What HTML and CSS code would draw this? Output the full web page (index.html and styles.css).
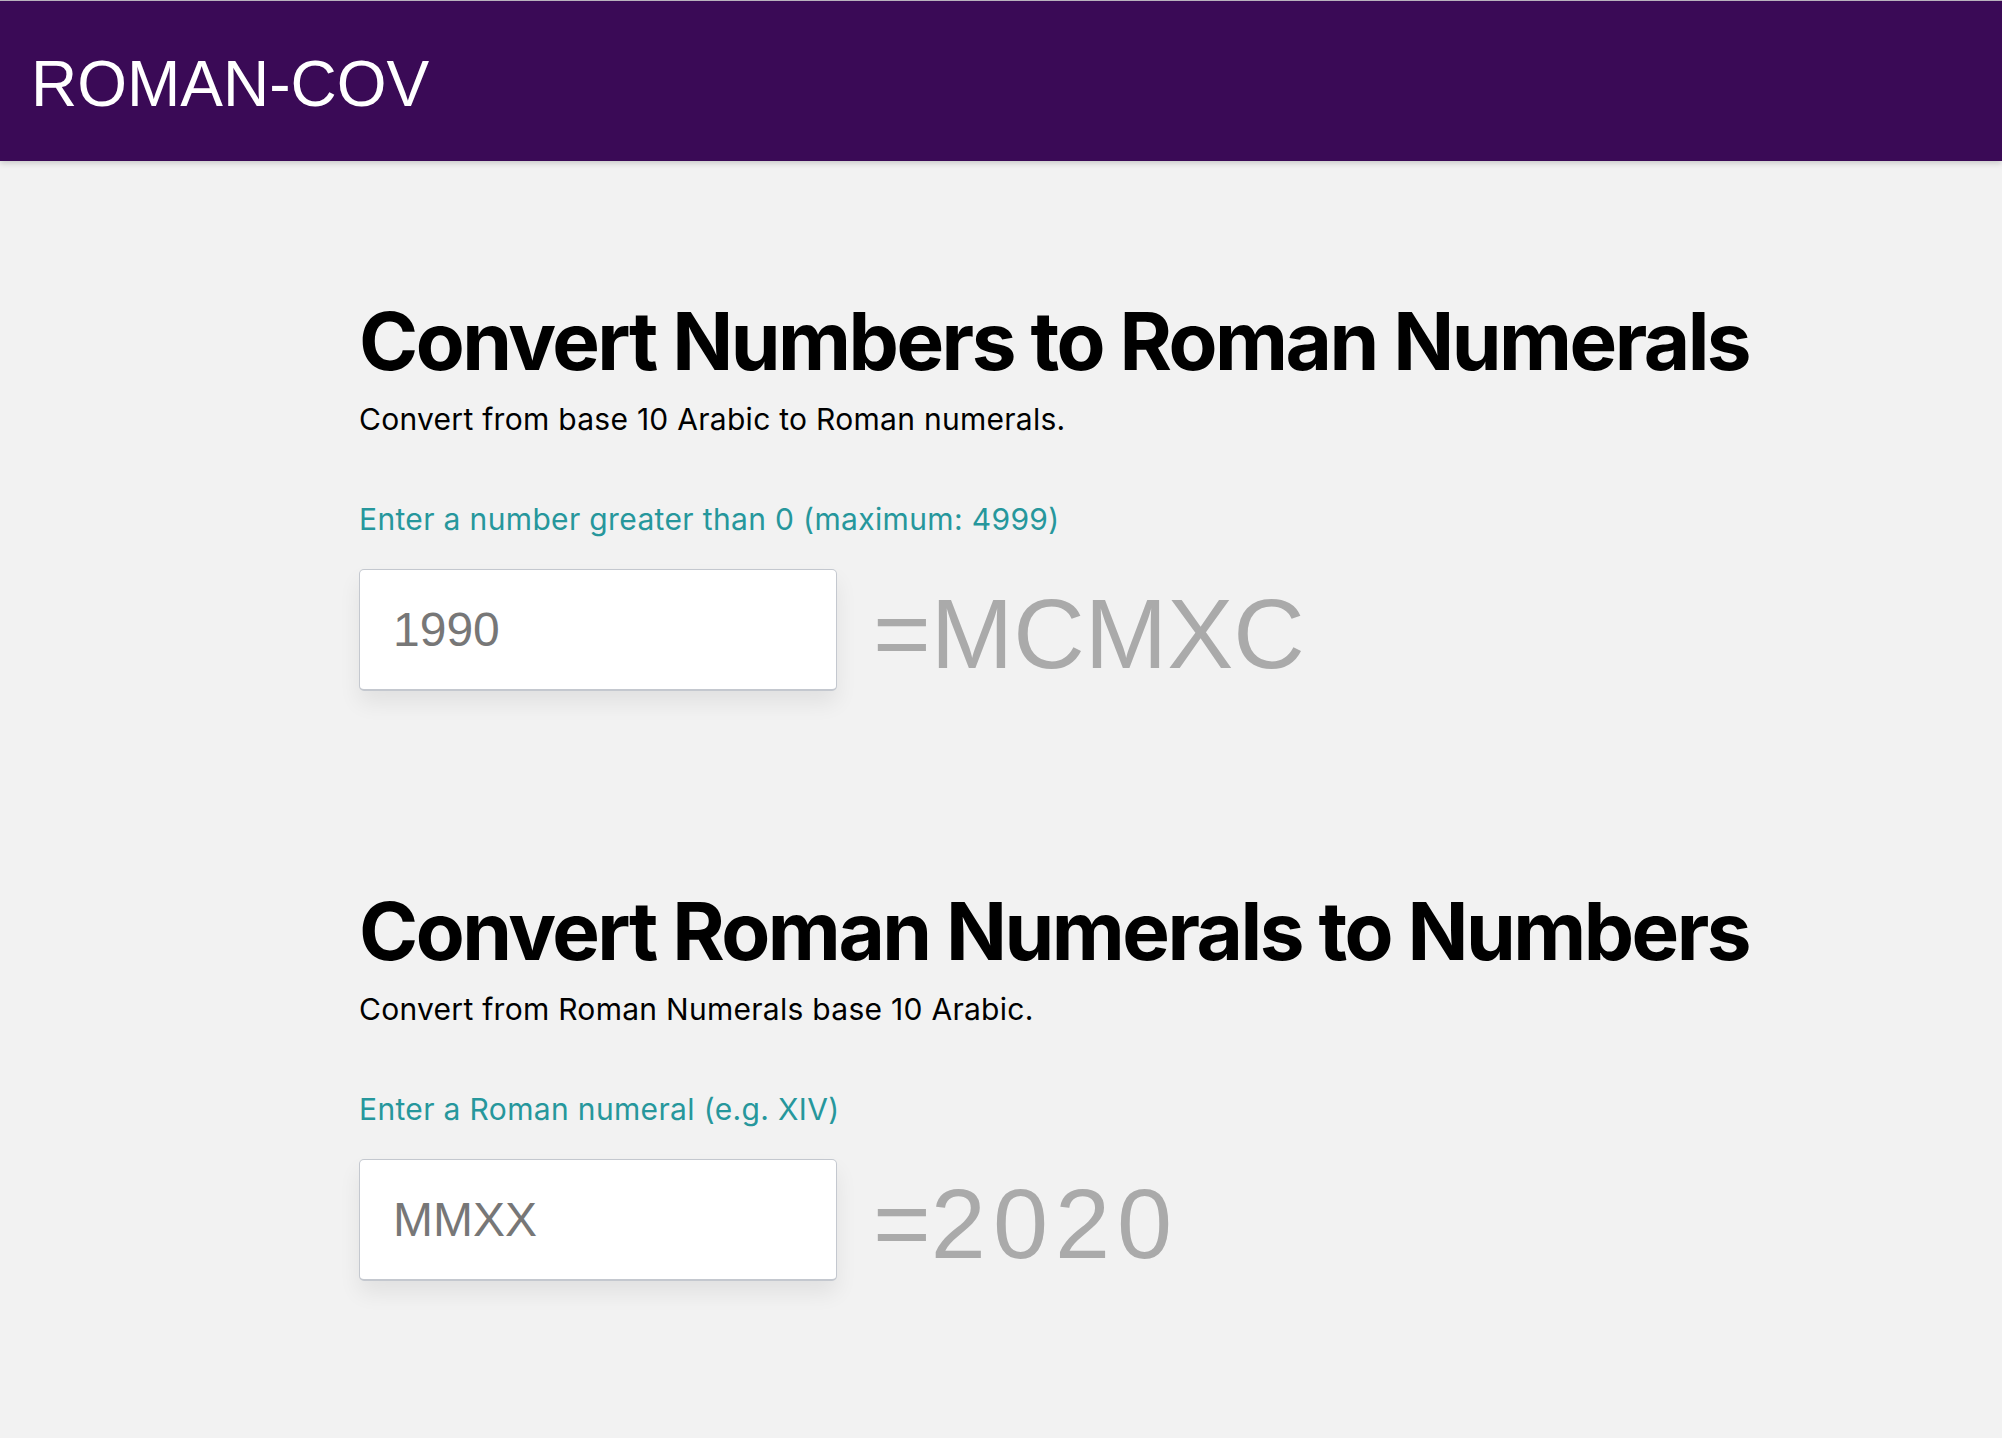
FILE: index.html
```html
<!DOCTYPE html>
<html lang="en">
<head>
<meta charset="utf-8">
<title>ROMAN-COV</title>
<link rel="stylesheet" href="styles.css">
</head>
<body>
<header class="topbar">
  <span class="brand">ROMAN-COV</span>
</header>
<main class="content">
  <section class="converter">
    <h1 class="title">Convert Numbers to Roman Numerals</h1>
    <p class="subtitle">Convert from base 10 Arabic to Roman numerals.</p>
    <label class="prompt" for="num">Enter a number greater than 0 (maximum: 4999)</label>
    <div class="row">
      <input class="field" id="num" type="text" value="1990">
      <span class="result">=MCMXC</span>
    </div>
  </section>
  <section class="converter">
    <h1 class="title">Convert Roman Numerals to Numbers</h1>
    <p class="subtitle">Convert from Roman Numerals base 10 Arabic.</p>
    <label class="prompt" for="rom">Enter a Roman numeral (e.g. XIV)</label>
    <div class="row">
      <input class="field" id="rom" type="text" value="MMXX">
      <span class="result">=<span class="digits">2020</span></span>
    </div>
  </section>
</main>
</body>
</html>
```
FILE: styles.css
```css
html, body {
  margin: 0;
  padding: 0;
}
body {
  background: #f2f2f2;
  font-family: Inter, "Noto Sans", sans-serif;
  color: #000;
  min-height: 1438px;
}
.topbar {
  height: 161px;
  box-sizing: border-box;
  border-top: 1px solid #b9b2bd;
  background: #3a0a56;
  display: flex;
  align-items: center;
  padding: 6px 31px 0;
  box-shadow: 0 2px 6px rgba(0, 0, 0, 0.18);
}
.brand {
  font-family: "Liberation Sans", Arial, sans-serif;
  font-size: 64px;
  line-height: 1;
  color: #fff;
}
.content {
  padding: 140px 0 0 359px;
}
.converter {
  display: flex;
  flex-direction: column;
  align-items: flex-start;
  margin-bottom: 200px;
}
.title {
  margin: 0;
  font-size: 80px;
  line-height: 1;
  font-weight: 700;
  letter-spacing: -2.5px;
  white-space: nowrap;
}
.subtitle {
  margin: 20px 0 0;
  font-size: 30px;
  line-height: 1.2;
  letter-spacing: 0.28px;
}
.prompt {
  margin-top: 64px;
  font-size: 30px;
  line-height: 1.2;
  letter-spacing: 0.35px;
  color: #26979c;
}
.row {
  margin-top: 32px;
  display: flex;
  align-items: center;
  gap: 36px;
}
.field {
  box-sizing: border-box;
  width: 478px;
  height: 122px;
  margin: 0;
  padding: 0 0 0 33px;
  border: 1px solid #c4c8cf;
  border-bottom-width: 2px;
  border-radius: 5px;
  background: #fff;
  box-shadow: 0 12px 22px rgba(0, 0, 0, 0.07);
  font-family: "Liberation Sans", Arial, sans-serif;
  font-size: 48px;
  color: #777;
  outline: none;
}
.result {
  font-family: "Liberation Sans", Arial, sans-serif;
  font-size: 99px;
  line-height: 1;
  color: #aaa;
  padding-top: 6px;
}
.digits {
  letter-spacing: 7px;
}
```
